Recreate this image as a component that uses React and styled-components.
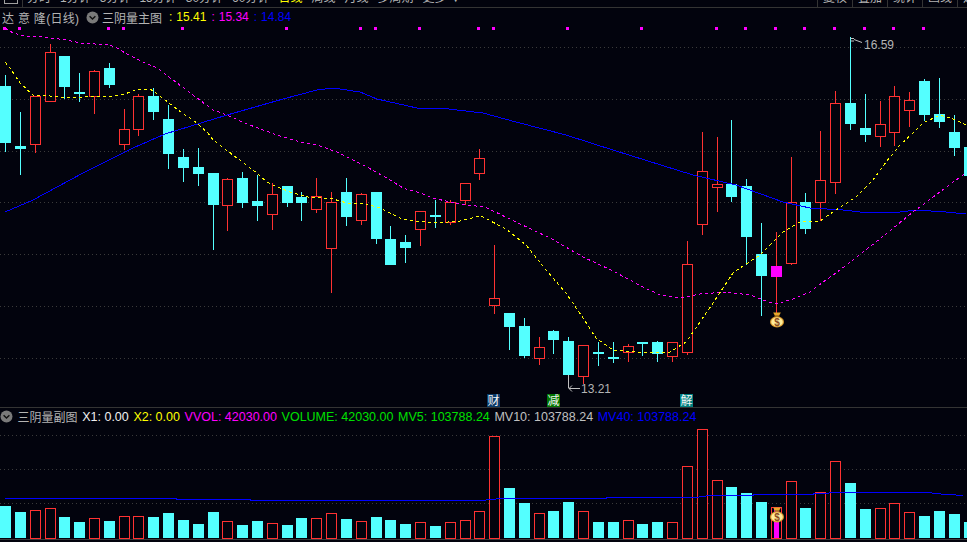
import React from "react";
import styled, { createGlobalStyle } from "styled-components";

const FONT = `"Liberation Sans", "Noto Sans CJK SC", sans-serif`;
const BG = "#02030d";
const RED = "#ff3232";
const CYAN = "#54ffff";
const MAGENTA = "#ff00ff";

// x, body top, body bottom, high, low, kind, volume top
const BARS = [
  [5, 86, 142, 75, 152, "down", 506],
  [20, 146, 148, 112, 175, "down", 512],
  [35, 96, 144, 96, 153, "up", 510],
  [50, 52, 101, 44, 101, "up", 508],
  [64, 56, 86, 56, 99, "down", 517],
  [79, 92, 93, 73, 102, "down", 522],
  [94, 71, 96, 70, 114, "up", 518],
  [109, 68, 84, 63, 88, "down", 521],
  [124, 129, 144, 109, 150, "up", 516],
  [138, 96, 129, 94, 136, "up", 516],
  [153, 96, 111, 88, 120, "down", 517],
  [168, 119, 153, 105, 169, "down", 513],
  [183, 157, 167, 149, 182, "down", 520],
  [198, 167, 173, 148, 186, "down", 524],
  [213, 173, 204, 173, 250, "down", 512],
  [227, 179, 205, 178, 231, "up", 521],
  [242, 178, 202, 172, 208, "down", 525],
  [257, 201, 205, 175, 221, "down", 521],
  [272, 194, 214, 183, 230, "up", 523],
  [287, 186, 202, 186, 207, "down", 525],
  [301, 197, 202, 192, 221, "down", 518],
  [316, 196, 209, 178, 213, "up", 518],
  [331, 202, 248, 192, 293, "up", 513],
  [346, 192, 216, 178, 226, "down", 519],
  [361, 194, 220, 193, 225, "up", 521],
  [376, 192, 238, 192, 244, "down", 517],
  [390, 239, 264, 226, 264, "down", 520],
  [405, 242, 247, 235, 263, "down", 524],
  [420, 211, 229, 211, 246, "up", 522],
  [435, 215, 216, 200, 228, "down", 526],
  [450, 202, 222, 200, 225, "up", 522],
  [465, 183, 200, 183, 205, "up", 520],
  [479, 158, 173, 149, 180, "up", 511],
  [494, 298, 305, 245, 314, "up", 436],
  [509, 313, 326, 313, 350, "down", 488],
  [524, 326, 355, 318, 358, "down", 503],
  [539, 347, 358, 337, 365, "up", 513],
  [553, 331, 339, 330, 354, "down", 511],
  [568, 341, 374, 337, 385, "down", 502],
  [583, 345, 376, 345, 384, "up", 511],
  [598, 352, 353, 342, 366, "down", 522],
  [613, 357, 358, 342, 363, "down", 522],
  [628, 346, 352, 344, 362, "up", 520],
  [642, 342, 343, 342, 356, "down", 524],
  [657, 342, 353, 341, 362, "down", 522],
  [672, 342, 356, 342, 362, "up", 522],
  [687, 264, 352, 241, 355, "up", 466],
  [702, 171, 224, 132, 235, "up", 429],
  [717, 184, 187, 137, 212, "up", 480],
  [731, 184, 196, 120, 202, "down", 487],
  [746, 186, 236, 179, 265, "down", 493],
  [761, 254, 275, 223, 316, "down", 502],
  [776, 266, 276, 232, 313, "mark", 507],
  [791, 202, 263, 157, 265, "up", 481],
  [805, 202, 228, 193, 234, "down", 508],
  [820, 180, 202, 131, 221, "up", 492],
  [835, 103, 182, 91, 194, "up", 461],
  [850, 103, 123, 37, 130, "down", 483],
  [865, 128, 134, 94, 142, "down", 509],
  [880, 124, 136, 101, 147, "up", 508],
  [894, 96, 132, 86, 146, "up", 503],
  [909, 100, 110, 92, 127, "up", 512],
  [924, 81, 114, 79, 121, "down", 516],
  [939, 114, 121, 78, 128, "down", 511],
  [954, 132, 147, 115, 156, "down", 514],
  [969, 147, 175, 130, 180, "down", 522],
];

const YELLOW_LINE =
  "5,62 10,68 20,83 33,95 50,96 72,98 95,96 110,97 125,94 138,89 150,89 160,96 178,110 197,123 208,133 213,140 233,155 253,170 267,182 277,187 290,192 308,197 333,199 347,203 363,203 380,208 400,218 413,221 437,223 460,221 480,216 483,217 506,229 526,245 546,270 566,293 583,318 596,338 613,350 636,352 670,352 686,342 700,322 713,303 733,273 740,268 760,255 783,232 800,222 820,221 836,210 856,197 873,180 886,162 900,145 913,133 923,123 940,115 956,120 966,125";
const MAGENTA_LINE =
  "5,28 13,33 25,36 43,37 67,40 80,43 110,45 117,48 125,53 143,62 157,68 173,80 197,98 213,110 227,115 247,124 277,135 300,142 317,145 337,152 367,167 390,180 403,188 420,193 433,198 450,202 467,205 485,207 516,222 550,238 583,257 611,270 643,287 660,295 680,298 700,294 726,292 750,295 766,301 776,304 793,299 810,292 826,280 840,270 876,242 913,212 956,180 966,173";
const BLUE_LINE =
  "5,212 33,200 83,173 133,148 165,134 227,115 283,99 317,90 333,88 360,92 377,99 417,108 440,108 483,113 516,122 566,135 616,151 693,175 736,185 783,202 810,208 843,210 860,212 900,212 916,210 946,212 966,214";
const VOLUME_LINE =
  "5,498.5 176,498.5 176,499.5 250,499.5 250,500.5 483,500.5 490,499.5 503,498.5 606,498.5 606,497.5 695,497.5 710,495.5 753,495.5 753,494.5 813,494.5 813,493.5 845,492.5 931,492.5 933,493.5 948,494.5 963,495.5";

const MARKS = [4, 19, 108, 123, 182, 286, 360, 375, 419, 478, 493, 567, 641, 716, 745, 775, 804, 834, 864, 893, 923];
const MAIN_GRID = [47.5, 99.5, 151.5, 202.5, 254.5, 306.5, 358.5];
const SUB_GRID = [435.5, 469.5, 503.5];
const PERIODS = ["分时", "1分钟", "5分钟", "15分钟", "30分钟", "60分钟", "日线", "周线", "月线", "多周期", "更多 ▼"];
const TOOLS = ["复权", "叠加", "统计", "画线", "选项"];
const NOTES = [
  { x: 487, label: "财", color: "#0a3a68" },
  { x: 547, label: "减", color: "#007400" },
  { x: 680, label: "解", color: "#008080" },
];
const SUB_VALUES = [
  { label: "X1: 0.00", color: "#f0f0f0" },
  { label: "X2: 0.00", color: "#ffff00" },
  { label: "VVOL: 42030.00", color: MAGENTA },
  { label: "VOLUME: 42030.00", color: "#00e000" },
  { label: "MV5: 103788.24", color: "#00e000" },
  { label: "MV10: 103788.24", color: "#c0c0c0" },
  { label: "MV40: 103788.24", color: "#0000ff" },
];

const GlobalStyle = createGlobalStyle`
  html, body {
    margin: 0;
    padding: 0;
    background: ${BG};
  }
`;

const Page = styled.div`
  display: flex;
  flex-direction: column;
  width: 967px;
  height: 542px;
  overflow: hidden;
  background: ${BG};
  font-family: ${FONT};
  font-size: 12px;
  color: #b4b4b4;
`;

const Toolbar = styled.div`
  display: flex;
  align-items: flex-end;
  height: 7px;
  flex: none;
  overflow: hidden;
  border-bottom: 1px solid #343434;
`;

const MenuCell = styled.div`
  display: flex;
  flex: none;
  justify-content: center;
  align-items: flex-end;
  width: 22px;
  height: 7px;
  border-right: 1px solid #343434;
`;

const MenuBars = styled.div`
  width: 12px;
  height: 3px;
  border: 1px solid #a0a0a0;
  border-top: none;
  margin-bottom: 3px;
`;

const PeriodList = styled.div`
  display: flex;
  gap: 9px;
  margin-left: 4px;
  margin-bottom: 2px;
  line-height: 14px;
  white-space: nowrap;
`;

const PeriodItem = styled.span`
  color: ${(p) => (p.$active ? "#ffff00" : "#b4b4b4")};
`;

const ToolTabs = styled.div`
  display: flex;
  flex: none;
  margin-left: auto;
  margin-right: -25px;
  height: 7px;
`;

const ToolTab = styled.div`
  display: flex;
  justify-content: center;
  align-items: flex-end;
  width: 34px;
  padding-bottom: 2px;
  border-left: 1px solid #343434;
  line-height: 14px;
  white-space: nowrap;
`;

const LegendRow = styled.div`
  display: flex;
  align-items: center;
  flex: none;
  height: ${(p) => p.$height}px;
  white-space: nowrap;
`;

const MainLegend = styled(LegendRow)`
  padding-left: 2px;
`;

const SubLegend = styled(LegendRow)`
  gap: 4.6px;
  border-top: 1px solid #343434;
  font-size: 12.5px;
`;

const StockName = styled.span`
  width: 78px;
  margin-right: 2px;
  letter-spacing: 0.3px;
`;

const IndicatorName = styled.span`
  margin: 0 2px 0 3px;
`;

const SubIndicatorName = styled.span`
  font-size: 12px;
`;

const LegendValue = styled.span`
  color: ${(p) => p.$color};
`;

const Separator = styled.span`
  margin: 0 4px 0 5px;
  color: ${(p) => p.$color};
`;

const ChartSvg = styled.svg`
  display: block;
  flex: none;
  width: 967px;
`;

const GridLine = styled.line`
  stroke: #3a3a3a;
  stroke-width: 1;
  stroke-dasharray: 1 3;
`;

const Wick = styled.rect`
  fill: ${(p) => (p.$kind === "down" ? CYAN : RED)};
  shape-rendering: crispEdges;
`;

const Body = styled.rect`
  shape-rendering: crispEdges;
  fill: ${(p) => (p.$kind === "down" ? CYAN : p.$kind === "mark" ? MAGENTA : BG)};
  stroke: ${(p) => (p.$kind === "up" ? RED : "none")};
  stroke-width: 1;
`;

const Trend = styled.polyline`
  fill: none;
  stroke: ${(p) => p.$color};
  stroke-width: 1;
  stroke-dasharray: ${(p) => (p.$dashed ? "3 3" : "none")};
  shape-rendering: crispEdges;
`;

const MarkDot = styled.rect`
  fill: ${MAGENTA};
  shape-rendering: crispEdges;
`;

const PriceLabel = styled.text`
  fill: #b4b4b4;
  font-size: 12px;
  font-family: ${FONT};
`;

const Pointer = styled.path`
  fill: none;
  stroke: #c0c0c0;
  stroke-width: 1;
`;

const NoteBox = styled.rect`
  fill: ${(p) => p.$color};
`;

const NoteText = styled.text`
  fill: #f4f4f4;
  font-size: 12px;
  text-anchor: middle;
  font-family: ${FONT};
`;

const BaseLine = styled.rect`
  fill: #3a3a3a;
`;

const Chevron = ({ marginLeft = 0 }) => (
  <svg width="13" height="13" viewBox="0 0 13 13" style={{ flex: "none", marginLeft }}>
    <circle cx="6.5" cy="6.5" r="6" fill="#7a7a7a" />
    <path d="M3.6 5.2 6.5 8 9.4 5.2" fill="none" stroke="#101010" strokeWidth="1.4" />
  </svg>
);

const MoneyBag = ({ x, y }) => (
  <g transform={`translate(${x} ${y})`}>
    <path d="M3.2 0h7.6l-1.8 3.6H5z" fill="#e8a82a" />
    <rect x="4.4" y="3" width="5.2" height="1.2" fill="#7a4a10" />
    <ellipse cx="7" cy="9.4" rx="7" ry="5.6" fill="#d9982a" />
    <ellipse cx="7" cy="9.4" rx="5.8" ry="4.5" fill="#ffec9a" />
    <text x="7" y="13" textAnchor="middle" fontSize="10" fontWeight="bold" fill="#8a4a20" fontFamily={FONT}>
      $
    </text>
  </g>
);

const MainChart = () => (
  <ChartSvg height="381" viewBox="0 26 967 381">
    {MAIN_GRID.map((y) => (
      <GridLine key={y} x1="0" x2="967" y1={y} y2={y} />
    ))}
    {BARS.map(([x, top, bottom, high, low, kind]) => (
      <g key={x}>
        <Wick $kind={kind} x={x} y={high} width="1" height={low - high} />
        {kind === "up" ? (
          <Body $kind={kind} x={x - 4.5} y={top + 0.5} width="10" height={bottom - top} />
        ) : (
          <Body $kind={kind} x={x - 5} y={top} width="11" height={bottom - top + 1} />
        )}
      </g>
    ))}
    <Trend $color="#0000ff" points={BLUE_LINE} />
    <Trend $color={MAGENTA} $dashed points={MAGENTA_LINE} />
    <Trend $color="#ffff00" $dashed points={YELLOW_LINE} />
    {MARKS.map((x) => (
      <MarkDot key={x} x={x - 1} y="27" width="3" height="3" />
    ))}
    <Pointer d="M850.5 38.5H854M850.5 41H854M854 39.5 862 42.5" />
    <PriceLabel x="864" y="49">16.59</PriceLabel>
    <Pointer d="M569 388.5H580M572 385.5 569 388.5 572 391.5M568.5 375V388" />
    <PriceLabel x="581" y="393">13.21</PriceLabel>
    <MoneyBag x={770} y={312.5} />
    {NOTES.map((note) => (
      <g key={note.x}>
        <NoteBox $color={note.color} x={note.x} y="394" width="13" height="13" />
        <NoteText x={note.x + 6.5} y="405">{note.label}</NoteText>
      </g>
    ))}
  </ChartSvg>
);

const VolumeChart = () => (
  <ChartSvg height="117" viewBox="0 425 967 117">
    {SUB_GRID.map((y) => (
      <GridLine key={y} x1="0" x2="967" y1={y} y2={y} />
    ))}
    {BARS.map(([x, , , , , kind, volumeTop]) =>
      kind === "down" ? (
        <Body key={x} $kind="down" x={x - 5} y={volumeTop} width="11" height={538 - volumeTop} />
      ) : (
        <g key={x}>
          <Body $kind="up" x={x - 4.5} y={volumeTop + 0.5} width="10" height={537.5 - volumeTop} />
          {kind === "mark" && <MarkDot x={x - 2} y={volumeTop + 1} width="5" height={537 - volumeTop} />}
        </g>
      )
    )}
    <Trend $color="#0000ff" points={VOLUME_LINE} />
    <MoneyBag x={770} y={507.5} />
    <BaseLine x="0" y="539" width="967" height="1" />
  </ChartSvg>
);

const App = () => (
  <>
    <GlobalStyle />
    <Page>
      <Toolbar>
        <MenuCell>
          <MenuBars />
        </MenuCell>
        <PeriodList>
          {PERIODS.map((period) => (
            <PeriodItem key={period} $active={period === "日线"}>
              {period}
            </PeriodItem>
          ))}
        </PeriodList>
        <ToolTabs>
          {TOOLS.map((tool) => (
            <ToolTab key={tool}>{tool}</ToolTab>
          ))}
        </ToolTabs>
      </Toolbar>
      <MainLegend $height={18}>
        <StockName>达 意 隆(日线)</StockName>
        <Chevron marginLeft={4} />
        <IndicatorName>三阴量主图</IndicatorName>
        <Separator $color="#ffff00">:</Separator>
        <LegendValue $color="#ffff00">15.41</LegendValue>
        <Separator $color={MAGENTA}>:</Separator>
        <LegendValue $color={MAGENTA}>15.34</LegendValue>
        <Separator $color="#0000ff">:</Separator>
        <LegendValue $color="#0000ff">14.84</LegendValue>
      </MainLegend>
      <MainChart />
      <SubLegend $height={17}>
        <Chevron />
        <SubIndicatorName>三阴量副图</SubIndicatorName>
        {SUB_VALUES.map((value) => (
          <LegendValue key={value.label} $color={value.color}>
            {value.label}
          </LegendValue>
        ))}
      </SubLegend>
      <VolumeChart />
    </Page>
  </>
);

export default App;
